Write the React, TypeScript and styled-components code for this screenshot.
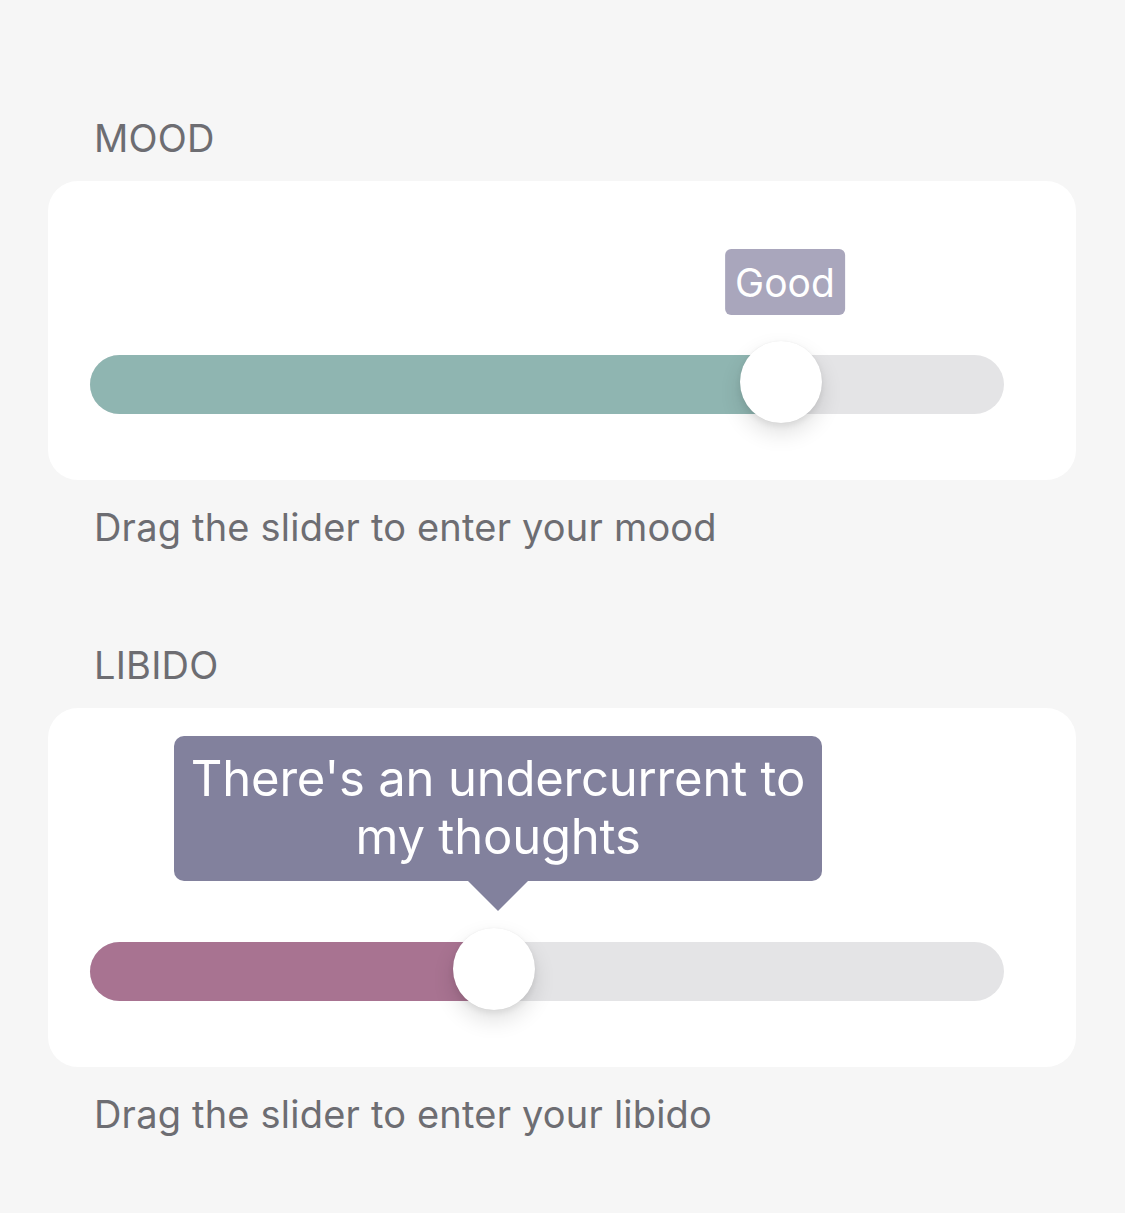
import React from "react";
import styled, { createGlobalStyle } from "styled-components";

const Global = createGlobalStyle`
  html, body { margin: 0; padding: 0; background: #f6f6f6; }
  body { font-family: Inter, "Noto Sans", "Liberation Sans", sans-serif; -webkit-font-smoothing: antialiased; }
`;

const Page = styled.div`
  width: 1125px;
  min-height: 1213px;
  background: #f6f6f6;
  box-sizing: border-box;
  padding: 113px 49px 0 48px;
  display: flex;
  flex-direction: column;
`;

const Section = styled.section`
  display: flex;
  flex-direction: column;
  margin-bottom: 88px;
`;

const Header = styled.div`
  font-size: 38px;
  line-height: 50px;
  color: #6d6d72;
  padding-left: 46px;
  margin-bottom: 18px;
  letter-spacing: 0.2px;
`;

const Footer = styled.div`
  font-size: 38px;
  line-height: 50px;
  color: #6d6d72;
  padding-left: 46px;
  margin-top: 22px;
  letter-spacing: 0.2px;
`;

const Card = styled.div<{ $top: number }>`
  background: #ffffff;
  border-radius: 30px;
  padding: ${(p) => p.$top}px 72px 66px 42px;
  display: flex;
  flex-direction: column;
`;

const BubbleRow = styled.div<{ $h: number; $gap: number }>`
  position: relative;
  height: ${(p) => p.$h}px;
  margin-bottom: ${(p) => p.$gap}px;
`;

const SmallBubble = styled.div`
  position: absolute;
  bottom: 0;
  transform: translateX(-50%);
  background: #a9a6bc;
  color: #ffffff;
  border-radius: 6px;
  height: 66px;
  padding: 0 10px;
  display: flex;
  align-items: center;
  font-size: 39px;
  white-space: nowrap;
`;

const BigBubble = styled.div`
  position: absolute;
  bottom: 30px;
  transform: translateX(-50%);
  width: 648px;
  box-sizing: border-box;
  background: #82819d;
  color: #ffffff;
  border-radius: 10px;
  padding: 14px 10px 15px;
  text-align: center;
  font-size: 49px;
  line-height: 58px;
  letter-spacing: -0.2px;
  &::after {
    content: "";
    position: absolute;
    left: 50%;
    top: 100%;
    transform: translateX(-50%);
    border-left: 30px solid transparent;
    border-right: 30px solid transparent;
    border-top: 30px solid #82819d;
  }
`;

const Track = styled.div`
  position: relative;
  height: 59px;
  border-radius: 30px;
  background: #e4e4e6;
`;

const Fill = styled.div<{ $color: string }>`
  position: absolute;
  left: 0;
  top: 0;
  bottom: 0;
  border-radius: 30px 0 0 30px;
  background: ${(p) => p.$color};
`;

const Thumb = styled.div`
  position: absolute;
  top: -14px;
  width: 82px;
  height: 82px;
  border-radius: 50%;
  background: #ffffff;
  transform: translateX(-50%);
  box-shadow: 0 10px 22px rgba(0, 0, 0, 0.12), 0 3px 6px rgba(0, 0, 0, 0.07), 0 0 1px rgba(0, 0, 0, 0.08);
`;

type SliderProps = {
  title: string;
  footer: string;
  value: number;
  color: string;
  label: string;
  big?: boolean;
};

function SliderSection({ title, footer, value, color, label, big }: SliderProps) {
  const pct = `${value * 100}%`;
  const labelPos = `calc(${pct} + 4px)`;
  return (
    <Section>
      <Header>{title}</Header>
      <Card $top={big ? 28 : 68}>
        <BubbleRow $h={big ? 175 : 66} $gap={big ? 31 : 40}>
          {big ? (
            <BigBubble style={{ left: labelPos }}>{label}</BigBubble>
          ) : (
            <SmallBubble style={{ left: labelPos }}>{label}</SmallBubble>
          )}
        </BubbleRow>
        <Track>
          <Fill $color={color} style={{ width: pct }} />
          <Thumb style={{ left: pct }} />
        </Track>
      </Card>
      <Footer>{footer}</Footer>
    </Section>
  );
}

export default function App() {
  return (
    <>
      <Global />
      <Page>
        <SliderSection
          title="MOOD"
          footer="Drag the slider to enter your mood"
          value={0.756}
          color="#8fb5b1"
          label="Good"
        />
        <SliderSection
          title="LIBIDO"
          footer="Drag the slider to enter your libido"
          value={0.442}
          color="#a87391"
          label="There's an undercurrent to my thoughts"
          big
        />
      </Page>
    </>
  );
}
